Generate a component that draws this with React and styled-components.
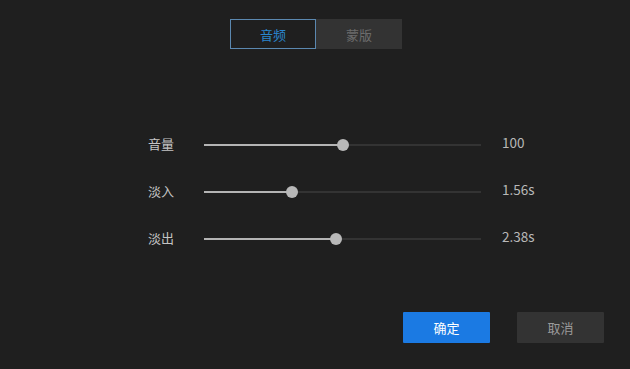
import React, { useState } from "react";
import styled, { createGlobalStyle } from "styled-components";

const GlobalStyle = createGlobalStyle`
  html, body {
    margin: 0;
    padding: 0;
    background: #1f1f1f;
  }
  body {
    font-family: "Noto Sans CJK SC", "Noto Sans", sans-serif;
  }
`;

const sliders = [
  { name: "音量", value: "100", ratio: 0.502 },
  { name: "淡入", value: "1.56s", ratio: 0.318 },
  { name: "淡出", value: "2.38s", ratio: 0.476 },
];

export default function App() {
  const [tab, setTab] = useState("audio");

  return (
    <Page>
      <GlobalStyle />
      <Tabs>
        <Tab active={tab === "audio"} onClick={() => setTab("audio")}>
          音频
        </Tab>
        <Tab active={tab === "mask"} onClick={() => setTab("mask")}>
          蒙版
        </Tab>
      </Tabs>

      <SliderList>
        {sliders.map((s) => (
          <Row key={s.name}>
            <Label>{s.name}</Label>
            <Track>
              <Fill style={{ width: `${s.ratio * 100}%` }} />
              <Thumb style={{ left: `${s.ratio * 100}%` }} />
            </Track>
            <Value>{s.value}</Value>
          </Row>
        ))}
      </SliderList>

      <Footer>
        <Button primary>确定</Button>
        <Button>取消</Button>
      </Footer>
    </Page>
  );
}

const Page = styled.div`
  width: 630px;
  height: 369px;
  box-sizing: border-box;
  background: #1f1f1f;
  display: flex;
  flex-direction: column;
  padding-top: 19px;
`;

const Tabs = styled.div`
  display: flex;
  justify-content: center;
  padding-left: 2px;
`;

const Tab = styled.div`
  width: 86px;
  height: 30px;
  box-sizing: border-box;
  display: flex;
  align-items: center;
  justify-content: center;
  font-size: 13px;
  cursor: pointer;
  color: ${(p) => (p.active ? "#2a86cf" : "#6c6c6c")};
  background: ${(p) => (p.active ? "#1f1f1f" : "#333333")};
  border: 1px solid ${(p) => (p.active ? "#5b88b0" : "#333333")};
`;

const SliderList = styled.div`
  margin-top: 72px;
  display: flex;
  flex-direction: column;
  padding-left: 148px;
`;

const Row = styled.div`
  display: grid;
  grid-template-columns: 56px 277px auto;
  align-items: center;
  height: 47px;
`;

const Label = styled.span`
  font-size: 13px;
  color: #c4c4c4;
  line-height: 1;
  margin-top: -2px;
`;

const Track = styled.div`
  position: relative;
  height: 2px;
  background: #333333;
`;

const Fill = styled.div`
  height: 100%;
  background: #b4b4b4;
`;

const Thumb = styled.div`
  position: absolute;
  top: 50%;
  width: 12px;
  height: 12px;
  border-radius: 50%;
  background: #b8b8b8;
  transform: translate(-50%, -50%);
`;

const Value = styled.span`
  padding-left: 21px;
  font-size: 13.5px;
  color: #b8b8b8;
  line-height: 1;
  margin-top: -4px;
`;

const Footer = styled.div`
  margin-top: 50px;
  display: flex;
  justify-content: flex-end;
  gap: 27px;
  padding-right: 26px;
`;

const Button = styled.button`
  width: 87px;
  height: 31px;
  border: none;
  border-radius: 1px;
  font-family: inherit;
  font-size: 13px;
  cursor: pointer;
  color: ${(p) => (p.primary ? "#ffffff" : "#9a9a9a")};
  background: ${(p) => (p.primary ? "#1b7ae3" : "#333333")};
`;
